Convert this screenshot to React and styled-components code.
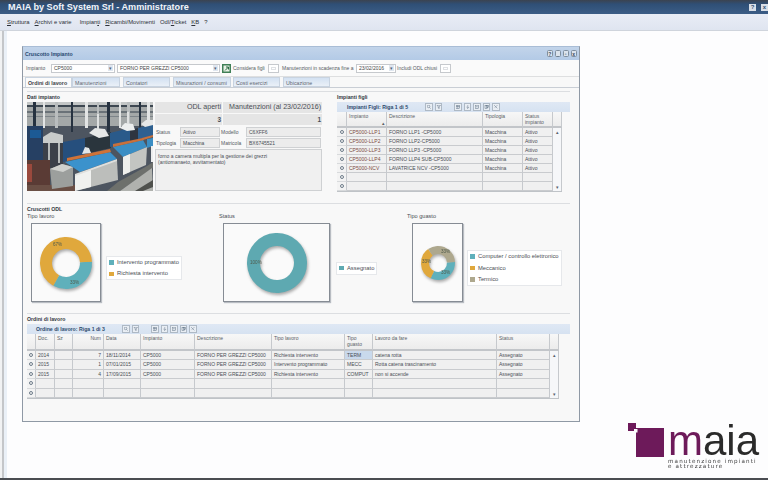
import React from "react";
import styled, { createGlobalStyle } from "styled-components";

const GlobalStyle = createGlobalStyle`
  html, body {
    margin: 0;
    padding: 0;
    width: 768px;
    height: 480px;
    overflow: hidden;
    background: #fdfdfe;
    font-family: "Liberation Sans", Arial, sans-serif;
    color: #3a3f47;
  }
  * { box-sizing: border-box; }
`;

const figliRows = [
  ["CP5000-LLP1", "FORNO LLP1 -CP5000", "Macchina", "Attivo"],
  ["CP5000-LLP2", "FORNO LLP2-CP5000", "Macchina", "Attivo"],
  ["CP5000-LLP3", "FORNO LLP3 -CP5000", "Macchina", "Attivo"],
  ["CP5000-LLP4", "FORNO LLP4 SUB-CP5000", "Macchina", "Attivo"],
  ["CP5000-NCV", "LAVATRICE NCV -CP5000", "Macchina", "Attivo"],
  ["", "", "", ""],
  ["", "", "", ""],
];

const ordiniRows = [
  ["2014", "", "7", "18/11/2014", "CP5000", "FORNO PER GREZZI CP5000", "Richiesta intervento", "TERM", "catena rotta", "Assegnato"],
  ["2015", "", "1", "07/01/2015", "CP5000", "FORNO PER GREZZI CP5000", "Intervento programmato", "MECC", "Rotta catena trascinamento", "Assegnato"],
  ["2015", "", "4", "17/09/2015", "CP5000", "FORNO PER GREZZI CP5000", "Richiesta intervento", "COMPUT", "non si accende", "Assegnato"],
  ["", "", "", "", "", "", "", "", "", ""],
  ["", "", "", "", "", "", "", "", "", ""],
];

export default function App() {
  return (
    <>
      <GlobalStyle />
      <Page>
        <TitleBar>
          <TitleText>MAIA by Soft System Srl - Amministratore</TitleText>
          <TitleButtons>
            <TitleButton>?</TitleButton>
            <TitleButton>x</TitleButton>
          </TitleButtons>
        </TitleBar>
        <MenuBar>
          <span><u>S</u>truttura</span>
          <span><u>A</u>rchivi e varie</span>
          <MenuSpaced>Impian<u>t</u>i</MenuSpaced>
          <span><u>R</u>icambi/Movimenti</span>
          <span>Odl/<u>T</u>icket</span>
          <span><u>K</u>B</span>
          <span>?</span>
        </MenuBar>
        <Body>
          <Rail />
          <Window>
            <WindowHeader>
              <span>Cruscotto Impianto</span>
              <WindowButtons>
                <WindowButton>?</WindowButton>
                <WindowButton>_</WindowButton>
                <WindowButton>▫</WindowButton>
                <WindowButton>x</WindowButton>
              </WindowButtons>
            </WindowHeader>

            <FilterBar>
              <FilterLabel $w={25}>Impianto</FilterLabel>
              <Select $w={64}>CP5000<Arrow>▾</Arrow></Select>
              <Select $w={103} $ml={2}>FORNO PER GREZZI CP5000<Arrow>▾</Arrow></Select>
              <GoIcon viewBox="0 0 9 9">
                <rect width="9" height="9" fill="#3f7f56" />
                <rect x="1.5" y="1.5" width="6" height="6" fill="#e8f2e6" />
                <path d="M3 6.5 L6.5 3 M4 3 H6.5 V5.5" stroke="#2c6a43" fill="none" />
              </GoIcon>
              <FilterLabel $w={35} $ml={2}>Considera figli</FilterLabel>
              <CheckBox />
              <FilterLabel $w={74}>Manutenzioni in scadenza fine a</FilterLabel>
              <Select $w={40}>23/02/2016<Arrow>▾</Arrow></Select>
              <FilterLabel $w={43} $ml={1}>Includi ODL chiusi</FilterLabel>
              <CheckBox />
            </FilterBar>

            <Tabs>
              <Tab $w={47} $active>Ordini di lavoro</Tab>
              <Tab $w={48}>Manutenzioni</Tab>
              <Tab $w={47} $ml={3}>Contatori</Tab>
              <Tab $w={58} $ml={3}>Misurazioni / consumi</Tab>
              <Tab $w={47} $ml={2}>Costi esercizi</Tab>
              <Tab $w={47} $ml={3}>Ubicazione</Tab>
            </Tabs>

            <Panel>
              <TopSection>
                <DatiBlock>
                  <SectionTitle>Dati impianto</SectionTitle>
                  <DatiBody>
                    <Photo />
                    <DatiInfo>
                      <StatGrid>
                        <StatCell>ODL aperti</StatCell>
                        <StatCell>Manutenzioni (al 23/02/2016)</StatCell>
                        <StatCell $value>3</StatCell>
                        <StatCell $value>1</StatCell>
                      </StatGrid>
                      <InfoGrid>
                        <InfoLabel>Status</InfoLabel>
                        <InfoField>Attivo</InfoField>
                        <InfoLabel>Modello</InfoLabel>
                        <InfoField>C6XFF6</InfoField>
                        <InfoLabel>Tipologia</InfoLabel>
                        <InfoField>Macchina</InfoField>
                        <InfoLabel>Matricola</InfoLabel>
                        <InfoField>BX6745521</InfoField>
                      </InfoGrid>
                      <NoteArea>
                        forno a camera multipla per la gestione dei grezzi
                        <br />
                        (antiomanaeto, avvitamentato)
                      </NoteArea>
                    </DatiInfo>
                  </DatiBody>
                </DatiBlock>

                <FigliBlock>
                  <SectionTitle>Impianti figli</SectionTitle>
                  <GridToolbar title="Impianti Figli: Riga 1 di 5" titleWidth={76} />
                  <DataGrid
                    columns="10px 40px 96px 40px 30px 9px"
                    headRow="16px"
                    rowHeight="9px"
                    rowCount={figliRows.length}
                  >
                    <HeadCell />
                    <HeadCell>Impianto<SortMark>▴</SortMark></HeadCell>
                    <HeadCell>Descrizione</HeadCell>
                    <HeadCell>Tipologia</HeadCell>
                    <HeadCell>Status<br />impianto</HeadCell>
                    <HeadCell />
                    {figliRows.map((row, i) => (
                      <React.Fragment key={i}>
                        <RowMark><Dot /></RowMark>
                        {row.map((value, j) => (
                          <Cell key={j} $link={j === 0}>{value}</Cell>
                        ))}
                        {i === 0 && <ScrollCell $rows={figliRows.length}><span>▴</span><span>▾</span></ScrollCell>}
                      </React.Fragment>
                    ))}
                  </DataGrid>
                </FigliBlock>
              </TopSection>

              <SectionTitle $mt={11} $h={8}>Cruscotti ODL</SectionTitle>
              <Charts>
                <ChartGroup>
                  <ChartLabel>Tipo lavoro</ChartLabel>
                  <ChartRow>
                    <ChartBox $w={70}>
                      <Donut
                        size={52}
                        thickness={12}
                        segments={[
                          { value: 34, color: "#5fb0bb", label: "33%", lx: 30, ly: 47 },
                          { value: 66, color: "#e0a83c", label: "67%", lx: 13, ly: 9 },
                        ]}
                      />
                    </ChartBox>
                    <Legend $ml={5}>
                      <LegendItem $color="#5fb0bb">Intervento programmato</LegendItem>
                      <LegendItem $color="#e0a83c">Richiesta intervento</LegendItem>
                    </Legend>
                  </ChartRow>
                </ChartGroup>
                <ChartGroup>
                  <ChartLabel>Status</ChartLabel>
                  <ChartRow>
                    <ChartBox $w={107}>
                      <Donut
                        size={60}
                        thickness={13}
                        segments={[{ value: 100, color: "#5ea9b1", label: "100%", lx: 3, ly: 31 }]}
                      />
                    </ChartBox>
                    <Legend $ml={6}>
                      <LegendItem $color="#5ea9b1">Assegnato</LegendItem>
                    </Legend>
                  </ChartRow>
                </ChartGroup>
                <ChartGroup>
                  <ChartLabel>Tipo guasto</ChartLabel>
                  <ChartRow>
                    <ChartBox $w={51} $ml={5}>
                      <Donut
                        size={34}
                        thickness={8}
                        segments={[
                          { value: 33, color: "#5fb0bb", label: "33%", lx: 20, ly: 28 },
                          { value: 33, color: "#e0a83c", label: "33%", lx: 1, ly: 17 },
                          { value: 34, color: "#aea88e", label: "33%", lx: 20, ly: 7 },
                        ]}
                      />
                    </ChartBox>
                    <Legend $ml={4}>
                      <LegendItem $color="#5fb0bb">Computer / controllo elettronico</LegendItem>
                      <LegendItem $color="#e0a83c">Meccanico</LegendItem>
                      <LegendItem $color="#aea88e">Termico</LegendItem>
                    </Legend>
                  </ChartRow>
                </ChartGroup>
              </Charts>

              <SectionTitle $mt={11}>Ordini di lavoro</SectionTitle>
              <GridToolbar title="Ordine di lavoro: Riga 1 di 3" titleWidth={84} inset={9} />
              <DataGrid
                columns="9px 19px 18px 31px 37px 54px 77px 73px 28px 124px 53px 9px"
                headRow="17px"
                rowHeight="9.5px"
                rowCount={ordiniRows.length}
              >
                <HeadCell />
                <HeadCell>Doc.</HeadCell>
                <HeadCell>Sz</HeadCell>
                <HeadCell $right>Num</HeadCell>
                <HeadCell>Data</HeadCell>
                <HeadCell>Impianto</HeadCell>
                <HeadCell>Descrizione</HeadCell>
                <HeadCell>Tipo lavoro</HeadCell>
                <HeadCell>Tipo<br />guasto</HeadCell>
                <HeadCell>Lavoro da fare</HeadCell>
                <HeadCell>Status</HeadCell>
                <HeadCell />
                {ordiniRows.map((row, i) => (
                  <React.Fragment key={i}>
                    <RowMark><Dot /></RowMark>
                    {row.map((value, j) => (
                      <Cell key={j} $right={j === 2} $selected={i === 0 && j === 7}>{value}</Cell>
                    ))}
                    {i === 0 && <ScrollCell $rows={ordiniRows.length}><span>▴</span><span>▾</span></ScrollCell>}
                  </React.Fragment>
                ))}
              </DataGrid>
            </Panel>
          </Window>

          <Logo>
            <LogoMark viewBox="0 0 36 35">
              <rect x="0" y="0" width="8" height="8" fill="#6d1a5a" />
              <path d="M8 5 H36 V34 H8 Z" fill="#6d1a5a" />
              <rect x="6" y="6" width="3.5" height="3.5" fill="#fdfdfe" />
            </LogoMark>
            <LogoText>
              <LogoWord><em>m</em>aia</LogoWord>
              <LogoTag>manutenzione impianti<br />e attrezzature</LogoTag>
            </LogoText>
          </Logo>
        </Body>
        <BottomEdge />
      </Page>
    </>
  );
}

function GridToolbar({ title, titleWidth, inset = 10 }) {
  return (
    <ToolbarStrip $inset={inset}>
      <ToolbarTitle $w={titleWidth}>{title}</ToolbarTitle>
      <ToolIcon><circle cx="3.2" cy="3" r="2" /><path d="M4.6 4.5 L6.5 6.5" /></ToolIcon>
      <ToolIcon><path d="M.8 1 H6.2 L4.2 3.6 V6.4 L2.8 5.6 V3.6 Z" /></ToolIcon>
      <ToolGap />
      <ToolIcon><rect x=".8" y="1" width="5.4" height="5" /><path d="M.8 3 H6.2 M3.5 1 V6" /></ToolIcon>
      <ToolIcon><path d="M3.5 1 V6 M1.5 4 L3.5 6 L5.5 4" /></ToolIcon>
      <ToolIcon><rect x="1" y="1" width="5" height="5" /><path d="M2 3.5 H5" /></ToolIcon>
      <ToolIcon><rect x=".8" y="1.5" width="3.5" height="4.5" /><rect x="3" y="1" width="3.2" height="3.5" /></ToolIcon>
      <ToolIcon><path d="M1 1 L6 6 M6 1 L3.5 3.5 M1.5 5.5 L2.5 4.5" /></ToolIcon>
    </ToolbarStrip>
  );
}

function DataGrid({ columns, headRow, rowHeight, rowCount, children }) {
  return (
    <GridFrame $columns={columns} $rows={`${headRow} repeat(${rowCount}, ${rowHeight})`}>
      {children}
    </GridFrame>
  );
}

function Donut({ size, thickness, segments }) {
  const r = (size - thickness) / 2;
  const c = size / 2;
  let offset = 0;
  return (
    <DonutSvg width={size} height={size} viewBox={`0 0 ${size} ${size}`}>
      {segments.map((s) => {
        const circle = (
          <circle
            key={s.color}
            cx={c}
            cy={c}
            r={r}
            fill="none"
            stroke={s.color}
            strokeWidth={thickness}
            pathLength="100"
            strokeDasharray={`${s.value} ${100 - s.value}`}
            strokeDashoffset={-offset}
            transform={`rotate(-3 ${c} ${c})`}
          />
        );
        offset += s.value;
        return circle;
      })}
      {segments.map((s) => (
        <DonutText key={s.color} x={s.lx} y={s.ly}>{s.label}</DonutText>
      ))}
    </DonutSvg>
  );
}

// photo of the furnace line, roughly traced
function Photo() {
  return (
    <PhotoSvg viewBox="0 0 126 89" preserveAspectRatio="none">
      <defs>
        <filter id="soft"><feGaussianBlur stdDeviation="0.5" /></filter>
      </defs>
      <g filter="url(#soft)">
        <rect width="126" height="89" fill="#4d5560" />
        <rect width="126" height="24" fill="#a4a8a8" />
        <rect y="0" width="126" height="3" fill="#c3c6c6" />
        <rect y="3" width="126" height="2" fill="#3c4651" />
        <rect y="9" width="126" height="2" fill="#6a7278" />
        <rect y="14" width="126" height="1" fill="#7d8489" />
        {[6, 16, 28, 44, 58, 70, 80, 92, 100, 112, 120].map((x, i) => (
          <rect key={x} x={x} y="0" width={i % 2 ? 2 : 3} height={i % 3 === 0 ? 30 : 26} fill={i % 3 === 1 ? "#e2e4e4" : i % 3 === 0 ? "#28323f" : "#b9bdbe"} />
        ))}
        <rect x="0" y="24" width="16" height="52" fill="#263f63" />
        <rect x="3" y="28" width="11" height="8" fill="#1f5a94" />
        <rect x="16" y="38" width="20" height="28" fill="#3a4048" />
        <polygon points="16,35 24,30 36,33 36,41 16,41" fill="#c8cbca" />
        <rect x="21" y="41" width="2" height="24" fill="#b5b9b9" />
        <rect x="31" y="41" width="2" height="20" fill="#b5b9b9" />
        <polygon points="36,40 58,36 58,54 36,60" fill="#274f7d" />
        <polygon points="58,36 84,30 84,46 58,52" fill="#2c343c" />
        <polygon points="83,31 103,26 103,40 83,45" fill="#2b5a8a" />
        <polygon points="103,28 111,26 111,38 103,40" fill="#2d3640" />
        <polygon points="111,26 126,22 126,34 111,37" fill="#2f6090" />
        <polygon points="62,31 68,26 78,27 82,34 72,36" fill="#e6e8e8" />
        <polygon points="93,26 98,21 106,22 108,28 100,29" fill="#eceeee" />
        <polygon points="114,22 119,18 126,18 126,23 118,25" fill="#e6e8e8" />
        <rect x="70" y="12" width="2" height="15" fill="#dfe1e1" />
        <rect x="100" y="10" width="2" height="12" fill="#dfe1e1" />

        <rect x="0" y="58" width="23" height="31" fill="#5a3a36" />
        <rect x="0" y="62" width="5" height="18" fill="#9a4a3c" />
        <polygon points="0,83 48,83 48,89 0,89" fill="#6a4f44" />

        <polygon points="23,67 35,62 46,65 46,84 25,87" fill="#9c9f9d" />
        <polygon points="23,67 35,62 46,65 36,70" fill="#cfd1ce" />

        <polygon points="38,60 83,50 90,57 53,70" fill="#3a92cc" />
        <polygon points="40,56 83,47 84,50 40,59" fill="#cf7338" />
        <polygon points="86,45 116,38 120,45 96,55" fill="#3a8ec4" />
        <polygon points="86,42 116,36 117,38 86,45" fill="#c9703a" />
        <polygon points="115,36 126,33 126,35 116,38" fill="#c9703a" />
        <polygon points="120,37 126,36 126,44 120,46" fill="#3a8ec4" />
        <polygon points="55,52 58,45 62,46 64,51" fill="#e2e6e8" />

        <polygon points="48,73 90,58 91,78 48,89" fill="#bcbebb" />
        <polygon points="48,73 64,67 64,85 48,89" fill="#f0f1ef" />
        <polygon points="48,72 90,57 90,59 48,74" fill="#dfe0dd" />
        <polygon points="96,55 120,45 119,63 96,73" fill="#c3c5c2" />
        <polygon points="96,55 103,52 103,70 96,73" fill="#eeefed" />
        <rect x="124" y="44" width="2" height="16" fill="#eceded" />

        <polygon points="91,80 120,64 126,60 126,66 100,84 93,89 80,89" fill="#6d6f6c" />
        <polygon points="93,89 125,66 126,89" fill="#b0b2ae" />
        <polygon points="108,89 126,78 126,85 116,89" fill="#4f514e" />
      </g>
    </PhotoSvg>
  );
}

const Page = styled.div`
  width: 768px;
  height: 480px;
  display: flex;
  flex-direction: column;
  overflow: hidden;
  filter: blur(0.3px);
`;

const TitleBar = styled.div`
  height: 14px;
  display: flex;
  align-items: center;
  justify-content: space-between;
  padding-left: 8px;
  background: linear-gradient(#3b4350 0, #2f4f76 30%, #3c5d86 100%);
`;

const TitleText = styled.div`
  font-size: 9.1px;
  font-weight: bold;
  color: #f2f5f9;
`;

const TitleButtons = styled.div`
  display: flex;
  gap: 5px;
`;

const TitleButton = styled.div`
  width: 7px;
  height: 7px;
  background: #d9dfe7;
  color: #2f4f76;
  font-size: 6px;
  font-weight: bold;
  line-height: 7px;
  text-align: center;
`;

const MenuBar = styled.div`
  height: 17px;
  display: flex;
  align-items: center;
  gap: 5px;
  padding: 0 0 1px 7px;
  font-size: 5.9px;
  color: #2d3138;
  background: linear-gradient(#e9edf6, #dfe5f0);
  border-bottom: 1px solid #cfd4dc;
`;

const MenuSpaced = styled.span`
  margin-left: 3px;
`;

const Body = styled.div`
  flex: 1;
  display: flex;
  min-height: 0;
`;

const Rail = styled.div`
  width: 7px;
  background: linear-gradient(90deg, #f1f2f3 0, #f1f2f3 2px, #c4c6c9 2px, #c4c6c9 4px, #eaf0f7 4px);
`;

const Window = styled.div`
  width: 558px;
  height: 376px;
  margin: 15px 0 0 15px;
  flex: none;
  display: flex;
  flex-direction: column;
  background: #f8f8f8;
  border: 1px solid #8f99a5;
  border-top-color: #a9bdd6;
`;

const WindowHeader = styled.div`
  height: 13px;
  display: flex;
  align-items: center;
  justify-content: space-between;
  padding: 0 2px 0 2px;
  font-size: 5.2px;
  font-weight: bold;
  color: #27476f;
  background: linear-gradient(#c2d4ea, #b3cae6);
`;

const WindowButtons = styled.div`
  display: flex;
  gap: 1.5px;
`;

const WindowButton = styled.div`
  width: 6.5px;
  height: 7px;
  border-radius: 1.5px;
  background: #dbe3ec;
  border: 0.5px solid #7f8f9f;
  color: #37485c;
  font-size: 5px;
  line-height: 6px;
  text-align: center;
`;

const FilterBar = styled.div`
  height: 17px;
  display: flex;
  align-items: center;
  padding-left: 3px;
  background: #fafafa;
  border-bottom: 1px solid #dedfe0;
  font-size: 5px;
`;

const FilterLabel = styled.div`
  width: ${(p) => p.$w}px;
  margin-left: ${(p) => p.$ml || 0}px;
  flex: none;
  white-space: nowrap;
  color: #565b63;
`;

const Select = styled.div`
  width: ${(p) => p.$w}px;
  margin-left: ${(p) => p.$ml || 0}px;
  height: 9px;
  flex: none;
  display: flex;
  align-items: center;
  justify-content: space-between;
  padding: 0 1px 0 2px;
  background: #fff;
  border: 1px solid #c6c9cd;
  font-size: 5px;
  color: #444;
  white-space: nowrap;
`;

const Arrow = styled.span`
  width: 5px;
  height: 6px;
  font-size: 5px;
  line-height: 6px;
  text-align: center;
  background: #dfe6ef;
  color: #52647a;
`;

const GoIcon = styled.svg`
  width: 9px;
  height: 9px;
  margin-left: 2px;
  flex: none;
`;

const CheckBox = styled.div`
  width: 11px;
  height: 9px;
  margin-right: 3px;
  flex: none;
  background: #fff;
  border: 1px solid #c6c9cd;
  box-shadow: inset 0 0 0 2px #fff, inset 0 0 0 3px #dfe1e4;
`;

const Tabs = styled.div`
  height: 11px;
  display: flex;
  padding-left: 2px;
  background: #f8f8f8;
  border-bottom: 1px solid #c9ced5;
`;

const Tab = styled.div`
  width: ${(p) => p.$w}px;
  margin-left: ${(p) => p.$ml || 0}px;
  padding-left: 2px;
  flex: none;
  font-size: 5.3px;
  line-height: 10px;
  white-space: nowrap;
  overflow: hidden;
  font-weight: ${(p) => (p.$active ? "bold" : "normal")};
  color: ${(p) => (p.$active ? "#3a3f47" : "#5f6772")};
  background: ${(p) => (p.$active ? "#fbfbfb" : "linear-gradient(#d3e1f2, #eaf0f7)")};
  border: 1px solid #c8d3e0;
  border-bottom: ${(p) => (p.$active ? "none" : "1px solid #c8d3e0")};
`;

const Panel = styled.div`
  flex: 1;
  min-height: 0;
  padding: 3px 9px 0 4px;
`;

const TopSection = styled.div`
  display: flex;
`;

const DatiBlock = styled.div`
  width: 310px;
  flex: none;
`;

const SectionTitle = styled.div`
  height: ${(p) => p.$h || 11}px;
  margin-top: ${(p) => p.$mt || 0}px;
  padding-top: 2px;
  border-top: 1px solid #dcdee1;
  font-size: 5.2px;
  font-weight: bold;
  line-height: 6px;
  color: #33383f;
`;

const DatiBody = styled.div`
  width: 296px;
  height: 90px;
  display: flex;
  gap: 2px;
`;

const PhotoSvg = styled.svg`
  width: 126px;
  height: 89px;
  flex: none;
`;

const DatiInfo = styled.div`
  width: 167px;
  display: flex;
  flex-direction: column;
`;

const StatGrid = styled.div`
  display: grid;
  grid-template-columns: 67px 99px;
  grid-template-rows: 11px 11px;
  gap: 1px;
`;

const StatCell = styled.div`
  background: #e5e5e5;
  padding-right: 1px;
  text-align: right;
  white-space: nowrap;
  color: #4a4e55;
  font-size: ${(p) => (p.$value ? "6.5px" : "7.1px")};
  font-weight: ${(p) => (p.$value ? "bold" : "normal")};
  line-height: 11px;
`;

const InfoGrid = styled.div`
  margin-top: 2px;
  display: grid;
  grid-template-columns: 25px 40px 26px 75px;
  grid-template-rows: 10px 10px;
  row-gap: 1px;
`;

const InfoLabel = styled.div`
  padding-left: 1px;
  font-size: 5px;
  line-height: 10px;
  color: #555a62;
`;

const InfoField = styled.div`
  padding-left: 2px;
  font-size: 5px;
  line-height: 9px;
  color: #4a4e55;
  background: #ececec;
  border: 1px solid #cfd1d3;
`;

const NoteArea = styled.div`
  flex: 1;
  margin: 1px 0;
  padding: 3px 2px;
  font-size: 5px;
  line-height: 6px;
  color: #4a4e55;
  background: #f0f0f0;
  border: 1px solid #cfd1d3;
`;

const FigliBlock = styled.div`
  flex: 1;
  min-width: 0;
`;

const ToolbarStrip = styled.div`
  height: 9.5px;
  display: flex;
  align-items: center;
  gap: 2px;
  padding-left: ${(p) => p.$inset}px;
  background: linear-gradient(#dfe8f4, #d6e2f1);
`;

const ToolbarTitle = styled.div`
  width: ${(p) => p.$w}px;
  flex: none;
  font-size: 5.2px;
  font-weight: bold;
  white-space: nowrap;
  color: #2e4a6d;
`;

const ToolGap = styled.div`
  width: 8px;
`;

const ToolIcon = styled.svg.attrs({ viewBox: "0 0 7 7" })`
  width: 7.5px;
  height: 7.5px;
  flex: none;
  padding: 0.5px;
  fill: none;
  stroke: #5e7083;
  stroke-width: 0.8;
  background: #e9eef4;
  border: 0.5px solid #aeb9c5;
`;

const GridFrame = styled.div`
  display: grid;
  width: fit-content;
  grid-template-columns: ${(p) => p.$columns};
  grid-template-rows: ${(p) => p.$rows};
  background: #f3f3f3;
  border-bottom: 1px solid #bfc3c7;
`;

const HeadCell = styled.div`
  padding: 1px 2px;
  font-size: 5px;
  line-height: 6px;
  color: #5a5f67;
  text-align: ${(p) => (p.$right ? "right" : "left")};
  position: relative;
  background: linear-gradient(#f7f7f7, #ececec);
  border-right: 1px solid #c6c9cd;
  border-bottom: 2px solid #c2c5c9;
`;

const SortMark = styled.span`
  position: absolute;
  right: 1px;
  bottom: 0;
  font-size: 5px;
`;

const RowMark = styled.div`
  display: flex;
  align-items: center;
  justify-content: center;
  background: #f3f3f3;
  border-right: 1px solid #c6c9cd;
  border-bottom: 1px solid #d8dadc;
`;

const Dot = styled.div`
  width: 4px;
  height: 4px;
  border-radius: 50%;
  border: 1px solid #6f7d8a;
`;

const Cell = styled.div`
  padding: 0 2px;
  font-size: 5px;
  line-height: 8.5px;
  white-space: nowrap;
  overflow: hidden;
  text-align: ${(p) => (p.$right ? "right" : "left")};
  color: ${(p) => (p.$link ? "#7c4a42" : "#4a4e55")};
  background: ${(p) => (p.$selected ? "#c9d9ec" : "#f0f0f0")};
  border-right: 1px solid #c6c9cd;
  border-bottom: 1px solid #c9cbce;
`;

const ScrollCell = styled.div`
  grid-column: -2;
  grid-row: 2 / span ${(p) => p.$rows};
  display: flex;
  flex-direction: column;
  justify-content: space-between;
  align-items: center;
  font-size: 5px;
  line-height: 8px;
  color: #59636e;
  background: #f6f7f9;
  border-right: 1px solid #c6c9cd;
`;

const Charts = styled.div`
  display: grid;
  grid-template-columns: 192px 188px auto;
`;

const ChartGroup = styled.div`
  min-width: 0;
`;

const ChartLabel = styled.div`
  height: 12px;
  font-size: 5.6px;
  line-height: 10px;
  color: #4a4e55;
`;

const ChartRow = styled.div`
  display: flex;
  align-items: center;
  padding-left: 4px;
`;

const ChartBox = styled.div`
  width: ${(p) => p.$w}px;
  height: 79px;
  margin-left: ${(p) => (p.$ml ? p.$ml - 4 : 0)}px;
  flex: none;
  display: flex;
  align-items: center;
  justify-content: center;
  background: #fafafa;
  border: 1px solid #868c94;
  box-shadow: 1px 1px 1px #b8bcc2;
`;

const DonutSvg = styled.svg`
  overflow: visible;
  filter: drop-shadow(1.5px 2px 1.5px rgba(70, 70, 70, 0.45));
`;

const DonutText = styled.text`
  font-family: "Liberation Sans", Arial, sans-serif;
  font-size: 4.6px;
  fill: #4f5a4c;
`;

const Legend = styled.div`
  margin: 11px 0 0 ${(p) => p.$ml}px;
  padding: 2px;
  flex: none;
  display: flex;
  flex-direction: column;
  gap: 4.5px;
  background: #fff;
  border: 1px solid #e6e8eb;
`;

const LegendItem = styled.div`
  display: flex;
  align-items: center;
  gap: 3px;
  font-size: 5.8px;
  line-height: 7px;
  white-space: nowrap;
  color: #4a4e55;

  &::before {
    content: "";
    width: 5px;
    height: 4.5px;
    background: ${(p) => p.$color};
  }
`;

const Logo = styled.div`
  align-self: flex-end;
  margin: 0 0 8px 48px;
  flex: none;
  display: flex;
  align-items: flex-start;
`;

const LogoMark = styled.svg`
  width: 36px;
  height: 35px;
  flex: none;
`;

const LogoText = styled.div`
  margin-left: 4px;
  display: flex;
  flex-direction: column;
`;

const LogoWord = styled.div`
  margin-top: -1px;
  height: 37px;
  font-size: 42px;
  line-height: 37px;
  color: #2a2a2a;

  em {
    font-style: normal;
    color: #6d1a5a;
  }
`;

const LogoTag = styled.div`
  font-family: "DejaVu Sans", sans-serif;
  font-size: 5.6px;
  line-height: 5.6px;
  letter-spacing: 1.15px;
  white-space: nowrap;
  color: #3c3c3c;
`;

const BottomEdge = styled.div`
  height: 2px;
  background: #4a4d52;
  flex: none;
`;
